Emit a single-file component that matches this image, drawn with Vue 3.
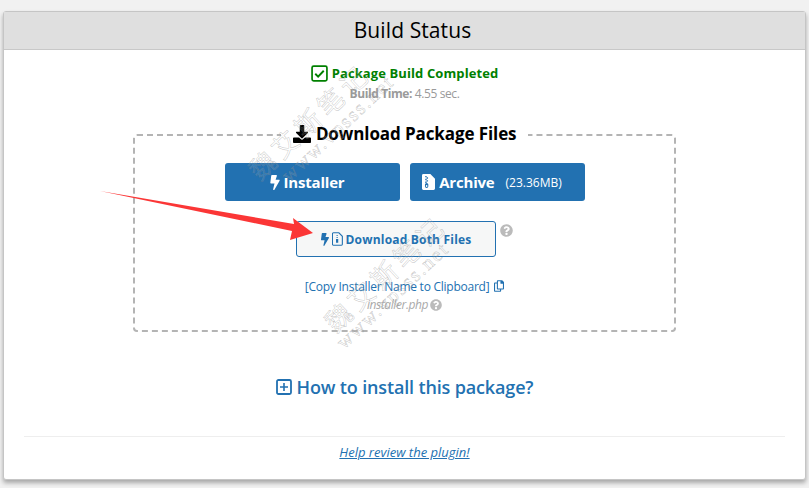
<script setup>
const boltPath = 'M296 160H180.600l42.600-129.800C227.200 15 215.700 0 200 0H56C44 0 33.800 8.900 32.200 20.800l-32 240C-1.700 275.200 9.500 288 24 288h118.700L96.600 482.500c-3.600 15.200 8 29.500 23.300 29.500 8.400 0 16.400-4.400 20.800-12l176-304c9.300-15.900-2.200-36-20.700-36z'
const helpPath = 'M504 256c0 137-111 248-248 248S8 393 8 256 119 8 256 8s248 111 248 248zM263 90c-55 0-90 23-117 64-4 5-3 12 2 16l35 26c5 4 13 3 17-2 18-23 30-36 57-36 20 0 45 13 45 33 0 15-12 23-33 34-23 14-54 31-54 73v4c0 7 5 12 12 12h56c7 0 12-5 12-12v-1c0-29 85-30 85-109 0-59-61-102-117-102zm-7 254c-26 0-47 21-47 47s21 47 47 47 47-21 47-47-21-47-47-47z'
</script>

<template>
  <div class="page">
    <section class="box">
      <h2 class="box-title">Build Status</h2>
      <div class="box-body">
        <div class="status">
          <svg class="check" viewBox="0 0 16 16" width="17" height="17">
            <rect x="1" y="1" width="14" height="14" rx="1.500" fill="none" stroke="currentColor" stroke-width="1.600" />
            <path d="M4 8.200l2.700 2.700L12 5.400" fill="none" stroke="currentColor" stroke-width="1.800" />
          </svg>
          <span>Package Build Completed</span>
        </div>
        <div class="build-time"><b>Build Time:</b> 4.55 sec.</div>

        <fieldset class="files">
          <legend>
            <svg viewBox="0 0 512 512" width="18" height="18">
              <path fill="#000" d="M216 0h80c13 0 24 11 24 24v168h88c18 0 27 21 14 34L270 378c-8 8-20 8-28 0L90 226c-13-13-4-34 14-34h88V24c0-13 11-24 24-24zM512 376v112c0 13-11 24-24 24H24c-13 0-24-11-24-24V376c0-13 11-24 24-24h147l49 49c20 20 52 20 72 0l49-49h147c13 0 24 11 24 24z" />
            </svg>
            Download Package Files
          </legend>
          <div class="main-btns">
            <a class="btn">
              <svg class="bolt" viewBox="0 0 320 512" width="10" height="15">
                <path fill="currentColor" :d="boltPath" />
              </svg>
              Installer
            </a>
            <a class="btn">
              <svg viewBox="0 0 14 17" width="13" height="16">
                <path fill="currentColor" fill-rule="evenodd" d="M1.500 0H9l5 5v10.500a1.500 1.500 0 0 1-1.500 1.500h-11A1.500 1.500 0 0 1 0 15.500v-14A1.500 1.500 0 0 1 1.500 0zM5 2H3.500v1.500H5V5H3.500v1.500H5V8H3.500v1.500H5zM5 9.500a1.800 1.800 0 0 0-1.800 1.800v1.900A1.800 1.800 0 0 0 5 15a1.800 1.800 0 0 0 1.800-1.800v-1.900A1.800 1.800 0 0 0 5 9.500zm0 2.200a.8.8 0 0 1 .8.8v.6a.8.8 0 0 1-1.600 0v-.6a.8.8 0 0 1 .8-.8zM6.500 2v1.500H5V5h1.500v1.500H5V8h1.500V2z" />
              </svg>
              Archive <small>(23.36MB)</small>
            </a>
          </div>
          <div class="both-row">
            <a class="btn-both">
              <svg viewBox="0 0 320 512" width="8" height="13">
                <path fill="currentColor" :d="boltPath" />
              </svg>
              <svg viewBox="0 0 12 15" width="11" height="14">
                <path fill="none" stroke="currentColor" stroke-width="1.200" d="M1.500.7h6l3.800 3.800v8.800a1 1 0 0 1-1 1h-8.800a1 1 0 0 1-1-1V1.700a1 1 0 0 1 1-1z" />
                <path fill="currentColor" d="M5 3h1.200v1.200H5zM5 5.200h1.200v1.200H5zM4.400 7.500h2.400v4H4.400z" />
              </svg>
              Download Both Files
            </a>
            <svg class="help help-both" viewBox="0 0 512 512" width="13" height="13">
              <path fill="#bbb" :d="helpPath" />
            </svg>
          </div>
          <div class="copy">
            [Copy Installer Name to Clipboard]
            <svg viewBox="0 0 448 512" width="10" height="12">
              <path fill="currentColor" d="M433.900 65.900l-51.900-51.900A48 48 0 0 0 348.100 0H176c-26.500 0-48 21.500-48 48v48H48c-26.500 0-48 21.500-48 48v320c0 26.500 21.500 48 48 48h224c26.500 0 48-21.500 48-48v-48h80c26.500 0 48-21.500 48-48V99.900a48 48 0 0 0-14.100-34zM266 464H54a6 6 0 0 1-6-6V150a6 6 0 0 1 6-6h74v224c0 26.500 21.500 48 48 48h96v42a6 6 0 0 1-6 6zm128-96H182a6 6 0 0 1-6-6V54a6 6 0 0 1 6-6h106v88c0 13.300 10.700 24 24 24h88v202a6 6 0 0 1-6 6z" />
            </svg>
          </div>
          <div class="installer-name">
            <i>installer.php</i>
            <svg class="help" viewBox="0 0 512 512" width="12" height="12">
              <path fill="#bbb" :d="helpPath" />
            </svg>
          </div>
        </fieldset>

        <div class="howto">
          <svg viewBox="0 0 16 16" width="16" height="16">
            <rect x="1" y="1" width="14" height="14" rx="1.500" fill="none" stroke="currentColor" stroke-width="1.800" />
            <path d="M8 4v8M4 8h8" fill="none" stroke="currentColor" stroke-width="1.600" />
          </svg>
          How to install this package?
        </div>

        <div class="review"><a>Help review the plugin!</a></div>
      </div>
    </section>

    <!-- watermark + annotation sit over the page -->
    <div class="wm cn wm-1">魏艾斯笔记</div>
    <div class="wm en wm-1b">www.vpsss.net</div>
    <div class="wm cn wm-2">魏艾斯笔记</div>
    <div class="wm en wm-2b">www.vpsss.net</div>
    <svg class="arrow" width="809" height="488" viewBox="0 0 809 488">
      <polygon fill="#fb3636" points="100,191 294,224 293,218 313,233 290,240 292,231" />
    </svg>
  </div>
</template>

<style scoped>
.page {
  position: relative;
  width: 809px;
  height: 488px;
  padding: 11px 3px 0;
  box-sizing: border-box;
  overflow: hidden;
  background: #f1f1f1;
  font-family: "Open Sans", "Noto Sans", sans-serif;
  font-size: 12px;
  color: #222;
}

.box {
  height: 469px;
  box-sizing: border-box;
  border: 1px solid #c5c5c5;
  border-radius: 3px;
  background: #fff;
  box-shadow: 0 3px 4px rgba(0, 0, 0, 0.3);
}

.box-title {
  margin: 0;
  height: 37px;
  padding-left: 16px;
  line-height: 37px;
  text-align: center;
  font-size: 21px;
  font-weight: 500;
  letter-spacing: 0.1px;
  color: #000;
  background: #dfdfdf;
  border-bottom: 1px solid #c8c8c8;
}

.box-body {
  padding: 13px 20px 0;
  text-align: center;
}

.status {
  display: flex;
  justify-content: center;
  align-items: center;
  gap: 4px;
  height: 20px;
  font-size: 13px;
  font-weight: 700;
  letter-spacing: 0.1px;
  color: #008000;
}

.build-time {
  margin-top: 2px;
  height: 17px;
  line-height: 17px;
  font-size: 12px;
  letter-spacing: -0.4px;
  color: #9a9a9a;
}

.files {
  box-sizing: border-box;
  width: 543px;
  height: 209px;
  margin: 21px auto 0;
  padding: 16px 0 0;
  border: 2px dashed #b4b4b4;
  border-radius: 4px;
}

.files legend {
  margin: 0 auto;
  padding: 0 12px;
  height: 24px;
  line-height: 22px;
  font-size: 17px;
  font-weight: 700;
  letter-spacing: -0.1px;
  color: #000;
}

.files legend svg {
  vertical-align: -3px;
  margin-right: 1px;
}

.main-btns {
  display: flex;
  justify-content: center;
  gap: 10px;
}

.btn {
  display: flex;
  justify-content: center;
  align-items: center;
  gap: 4px;
  box-sizing: border-box;
  width: 175px;
  height: 38px;
  padding-right: 10px;
  border-radius: 3px;
  background: #2271b1;
  font-size: 15px;
  font-weight: 700;
  letter-spacing: -0.2px;
  color: #fff;
}

.btn small {
  margin-left: 7px;
  font-size: 12px;
  font-weight: 400;
  letter-spacing: 0;
}

.both-row {
  display: flex;
  justify-content: center;
  align-items: flex-start;
  gap: 4px;
  margin-top: 20px;
}

.btn-both {
  display: flex;
  justify-content: center;
  align-items: center;
  gap: 3px;
  box-sizing: border-box;
  width: 200px;
  height: 36px;
  border: 1px solid #2271b1;
  border-radius: 3px;
  background: #f6f7f7;
  font-size: 12px;
  font-weight: 700;
  letter-spacing: 0.2px;
  color: #2271b1;
}

.help-both {
  margin-top: 3px;
}

.copy {
  margin-top: 21px;
  height: 17px;
  line-height: 17px;
  font-size: 12px;
  letter-spacing: -0.25px;
  color: #2271b1;
}

.copy svg {
  vertical-align: -1px;
  margin-left: 2px;
}

.installer-name {
  margin-top: 1px;
  height: 18px;
  line-height: 18px;
  font-size: 12px;
  letter-spacing: -0.4px;
  color: #aaa;
}

.installer-name svg {
  vertical-align: -2px;
  margin-left: 2px;
}

.howto {
  display: flex;
  justify-content: center;
  align-items: center;
  gap: 5px;
  margin-top: 43px;
  height: 24px;
  font-size: 18px;
  font-weight: 600;
  letter-spacing: -0.15px;
  color: #2271b1;
}

.review {
  margin-top: 37px;
  padding-top: 6px;
  height: 24px;
  line-height: 18px;
  border-top: 1px solid #eee;
  font-size: 13px;
  font-style: italic;
  letter-spacing: 0;
}

.review a {
  color: #2271b1;
  text-decoration: underline;
}

.wm {
  position: absolute;
  white-space: nowrap;
  line-height: 1;
  transform-origin: left bottom;
  transform: rotate(-43deg);
  color: rgba(255, 255, 255, 0.1);
  -webkit-text-stroke: 0.5px rgba(130, 130, 130, 0.45);
  pointer-events: none;
}

.cn {
  font-family: "Noto Sans CJK SC", "Liberation Serif", serif;
  font-size: 26px;
  letter-spacing: 5px;
}

.en {
  font-family: "Liberation Serif", serif;
  font-size: 20px;
  letter-spacing: 2px;
}

.wm-1 { left: 261px; top: 157px; }
.wm-1b { left: 291px; top: 165px; }
.wm-2 { left: 337px; top: 309px; }
.wm-2b { left: 346px; top: 332px; }

.arrow {
  position: absolute;
  left: 0;
  top: 0;
  pointer-events: none;
}
</style>
